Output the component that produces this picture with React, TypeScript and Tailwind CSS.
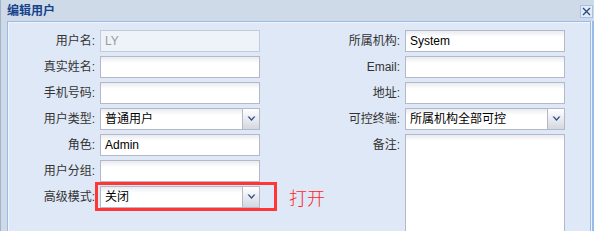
import type { ReactNode } from "react";

const FONT = { fontFamily: '"Liberation Sans", "Noto Sans CJK SC", sans-serif' };

function Chevron() {
  return (
    <svg width="9" height="6" viewBox="0 0 9 6">
      <path d="M0.5 0.5 L4.5 5 L8.5 0.5 L6.8 0.5 L4.5 3 L2.2 0.5 Z" fill="#2d4f86" />
    </svg>
  );
}

function TextField({ value, disabled }: { value?: string; disabled?: boolean }) {
  if (disabled) {
    return (
      <div className="h-[22px] w-[160px] border border-[#c3cbd9] bg-[#eef2f9] px-[4px] flex items-center text-[12px] text-[#9a9a9a]">
        {value}
      </div>
    );
  }
  return (
    <div className="h-[22px] w-[160px] border border-[#b5b8c8] bg-[linear-gradient(to_bottom,#e9ebef,#ffffff_6px)] px-[4px] flex items-center text-[12px] text-black">
      {value}
    </div>
  );
}

function SelectField({ value }: { value: string }) {
  return (
    <div className="h-[22px] w-[160px] flex border border-[#b5b8c8] bg-[linear-gradient(to_bottom,#e9ebef,#ffffff_6px)]">
      <div className="flex-1 px-[4px] flex items-center text-[12px] text-black">{value}</div>
      <div className="w-[17px] border-l border-[#b5b8c8] bg-[linear-gradient(to_bottom,#ffffff,#d3d8e0)] flex items-center justify-center">
        <Chevron />
      </div>
    </div>
  );
}

function Row({ label, labelWidth, children }: { label: string; labelWidth: string; children: ReactNode }) {
  return (
    <div className="flex items-start">
      <div className={`${labelWidth} h-[22px] flex items-center justify-end text-[12px] text-[#333333] whitespace-nowrap`}>
        {label}
      </div>
      <div className="ml-[5px]">{children}</div>
    </div>
  );
}

export default function App() {
  return (
    <div className="w-[594px] h-[231px] overflow-hidden bg-[#cfdae9] border-l border-[#a4b3c9]" style={FONT}>
      <div className="h-[21px] flex items-center justify-between pl-[6px]">
        <span className="text-[12px] font-bold text-[#15428b] leading-none">编辑用户</span>
        <div className="mr-[1px] mt-[1px] w-[13px] h-[13px] border border-[#a9c0e3] bg-[#e3ebf6] flex items-center justify-center">
          <svg width="9" height="9" viewBox="0 0 9 9">
            <path d="M1 1 L8 8 M8 1 L1 8" stroke="#2a4a88" strokeWidth="1.4" />
          </svg>
        </div>
      </div>
      <div className="flex h-[210px]">
        <div className="ml-[6px] w-[584px] h-[240px] border border-[#99bbe8] bg-[#dfe8f6]">
          <div className="h-full border-t border-l border-[#f1f5fb] pt-[7px] flex">
            <div className="flex flex-col gap-[4px]">
              <Row label="用户名:" labelWidth="w-[86px]">
                <TextField value="LY" disabled />
              </Row>
              <Row label="真实姓名:" labelWidth="w-[86px]">
                <TextField />
              </Row>
              <Row label="手机号码:" labelWidth="w-[86px]">
                <TextField />
              </Row>
              <Row label="用户类型:" labelWidth="w-[86px]">
                <SelectField value="普通用户" />
              </Row>
              <Row label="角色:" labelWidth="w-[86px]">
                <TextField value="Admin" />
              </Row>
              <Row label="用户分组:" labelWidth="w-[86px]">
                <TextField />
              </Row>
              <div className="relative">
                <Row label="高级模式:" labelWidth="w-[86px]">
                  <SelectField value="关闭" />
                </Row>
                <div className="absolute left-[86px] top-[-4px] w-[182px] h-[29px] border-[3px] border-[#ff3636]" />
                <span className="absolute left-[280px] top-[4px] whitespace-nowrap text-[18px] leading-none font-light text-[#ff1f1f]">
                  打开
                </span>
              </div>
            </div>
            <div className="flex flex-col gap-[4px]">
              <Row label="所属机构:" labelWidth="w-[140px]">
                <TextField value="System" />
              </Row>
              <Row label="Email:" labelWidth="w-[140px]">
                <TextField />
              </Row>
              <Row label="地址:" labelWidth="w-[140px]">
                <TextField />
              </Row>
              <Row label="可控终端:" labelWidth="w-[140px]">
                <SelectField value="所属机构全部可控" />
              </Row>
              <Row label="备注:" labelWidth="w-[140px]">
                <div className="w-[160px] h-[120px] border border-[#b5b8c8] bg-[linear-gradient(to_bottom,#e9ebef,#ffffff_6px)]" />
              </Row>
            </div>
          </div>
        </div>
        <div className="w-[1px] bg-[#eef3fa]" />
        <div className="w-[2px] bg-[#99bbe8]" />
      </div>
    </div>
  );
}
